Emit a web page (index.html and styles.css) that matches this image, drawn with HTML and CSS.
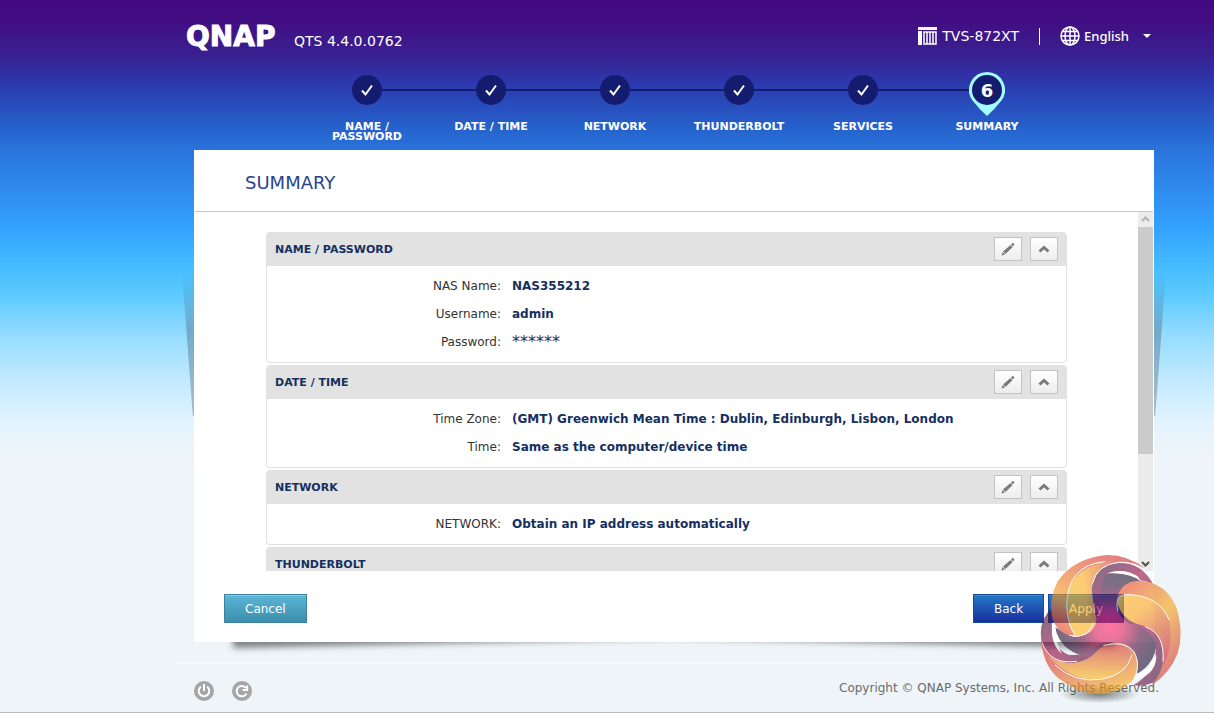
FILE: index.html
```html
<!DOCTYPE html>
<html lang="en">
<head>
    <meta charset="UTF-8">
    <meta name="viewport" content="width=device-width, initial-scale=1.0">
    <title>QTS Setup</title>
    <link rel="stylesheet" href="styles.css">
</head>
<body>
    <!-- shared icons -->
    <svg class="sprite" aria-hidden="true">
        <symbol id="check" viewBox="0 0 14 14"><path d="M2 7.500l3.500 4L12 2.500" fill="none" stroke="#fff" stroke-width="2"/></symbol>
        <symbol id="pencil" viewBox="0 0 14 14"><path d="M.5 13.500l1-3.500 2.500 2.500z M2 9.500l7.500-6.500 2 2.200-7 6.800z M10 2.500L11.800.8l1.700 1.800-1.600 1.900z" fill="#7a7a7a"/></symbol>
        <symbol id="chevron" viewBox="0 0 12 8"><path d="M1.500 6.500L6 2.500l4.500 4" fill="none" stroke="#7a7a7a" stroke-width="3"/></symbol>
    </svg>

    <div class="page">
        <header class="top">
            <div class="brand">
                <span class="logo">QNAP</span>
                <span class="version">QTS 4.4.0.0762</span>
            </div>
            <div class="device">
                <svg width="19" height="18" viewBox="0 0 19 18">
                    <path d="M0 0h19v3H0z M0 4h4v14H0z" fill="#fff"/>
                    <path d="M6 5h12v12H6z M9 5v12 M12 5v12 M15 5v12" fill="none" stroke="#fff" stroke-width="1.500"/>
                </svg>
                <span class="model">TVS-872XT</span>
                <span class="divider"></span>
                <label for="language" aria-label="Language">
                    <svg width="20" height="20" viewBox="0 0 20 20" fill="none" stroke="#fff" stroke-width="1.500">
                        <circle cx="10" cy="10" r="9"/>
                        <ellipse cx="10" cy="10" rx="5" ry="9"/>
                        <path d="M10 1v18 M1 10h18 M2.500 5.500h15 M2.500 14.500h15"/>
                    </svg>
                </label>
                <select id="language" class="language">
                    <option>English</option>
                </select>
                <svg class="caret" width="8" height="4" viewBox="0 0 8 4"><path d="M0 0h8L4 4z" fill="#fff"/></svg>
            </div>
        </header>

        <ol class="steps">
            <li><span class="dot"><svg width="14" height="14"><use href="#check"/></svg></span><span class="step-name">NAME / PASSWORD</span></li>
            <li><span class="dot"><svg width="14" height="14"><use href="#check"/></svg></span><span class="step-name">DATE / TIME</span></li>
            <li><span class="dot"><svg width="14" height="14"><use href="#check"/></svg></span><span class="step-name">NETWORK</span></li>
            <li><span class="dot"><svg width="14" height="14"><use href="#check"/></svg></span><span class="step-name">THUNDERBOLT</span></li>
            <li><span class="dot"><svg width="14" height="14"><use href="#check"/></svg></span><span class="step-name">SERVICES</span></li>
            <li class="current">
                <span class="dot">6</span>
                <svg class="pin" width="36" height="44" viewBox="0 0 36 44"><path d="M18 0a18 18 0 0 1 14.500 28.600Q26 37 18 44 10 37 3.500 28.600A18 18 0 0 1 18 0z" fill="#a1fbff"/></svg>
                <span class="step-name">SUMMARY</span>
            </li>
        </ol>

        <main class="card">
            <h1>SUMMARY</h1>
            <div class="viewport">
                <div class="sections">
                    <section>
                        <div class="section-head">
                            <h2>NAME / PASSWORD</h2>
                            <button class="tool" aria-label="Edit"><svg width="14" height="14"><use href="#pencil"/></svg></button>
                            <button class="tool" aria-label="Collapse"><svg width="12" height="8"><use href="#chevron"/></svg></button>
                        </div>
                        <dl>
                            <dt>NAS Name:</dt><dd>NAS355212</dd>
                            <dt>Username:</dt><dd>admin</dd>
                            <dt>Password:</dt><dd class="masked">******</dd>
                        </dl>
                    </section>
                    <section>
                        <div class="section-head">
                            <h2>DATE / TIME</h2>
                            <button class="tool" aria-label="Edit"><svg width="14" height="14"><use href="#pencil"/></svg></button>
                            <button class="tool" aria-label="Collapse"><svg width="12" height="8"><use href="#chevron"/></svg></button>
                        </div>
                        <dl>
                            <dt>Time Zone:</dt><dd>(GMT) Greenwich Mean Time : Dublin, Edinburgh, Lisbon, London</dd>
                            <dt>Time:</dt><dd>Same as the computer/device time</dd>
                        </dl>
                    </section>
                    <section>
                        <div class="section-head">
                            <h2>NETWORK</h2>
                            <button class="tool" aria-label="Edit"><svg width="14" height="14"><use href="#pencil"/></svg></button>
                            <button class="tool" aria-label="Collapse"><svg width="12" height="8"><use href="#chevron"/></svg></button>
                        </div>
                        <dl>
                            <dt>NETWORK:</dt><dd>Obtain an IP address automatically</dd>
                        </dl>
                    </section>
                    <section>
                        <div class="section-head">
                            <h2>THUNDERBOLT</h2>
                            <button class="tool" aria-label="Edit"><svg width="14" height="14"><use href="#pencil"/></svg></button>
                            <button class="tool" aria-label="Collapse"><svg width="12" height="8"><use href="#chevron"/></svg></button>
                        </div>
                    </section>
                </div>
                <div class="scrollbar">
                    <svg width="15" height="15" viewBox="0 0 15 15"><path d="M4 9l3.500-3.500L11 9" fill="none" stroke="#b0b0b0" stroke-width="2"/></svg>
                    <div class="track"><div class="thumb"></div></div>
                    <svg width="15" height="15" viewBox="0 0 15 15"><path d="M4 6l3.500 3.500L11 6" fill="none" stroke="#505050" stroke-width="2"/></svg>
                </div>
            </div>
            <div class="actions">
                <button class="btn cancel">Cancel</button>
                <button class="btn">Back</button>
                <button class="btn">Apply</button>
            </div>
            <div class="side-shadow left"></div>
            <div class="side-shadow right"></div>
            <div class="bottom-shadow"><div class="wedge"></div></div>
        </main>

        <footer>
            <button class="round" aria-label="Power">
                <svg width="20" height="20" viewBox="0 0 20 20"><circle cx="10" cy="10" r="10" fill="#a5a5a5"/><path d="M7 5.600a5.300 5.300 0 1 0 6 0 M10 3v7" fill="none" stroke="#fff" stroke-width="2"/></svg>
            </button>
            <button class="round" aria-label="Restart">
                <svg width="20" height="20" viewBox="0 0 20 20"><circle cx="10" cy="10" r="10" fill="#a5a5a5"/><path d="M14.500 12.500a5.200 5.200 0 1 1-.5-5.500 M15.200 4.500v4.500h-4.500" fill="none" stroke="#fff" stroke-width="2"/></svg>
            </button>
            <p>Copyright © QNAP Systems, Inc. All Rights Reserved.</p>
        </footer>

        <svg class="swirl" width="170" height="173" viewBox="0 0 510 519" aria-hidden="true">
            <defs>
                <linearGradient id="armA" x1=".8" y1="0" x2=".2" y2="1"><stop offset="0" stop-color="#d02c38"/><stop offset=".35" stop-color="#e6602c"/><stop offset=".7" stop-color="#f79a1c"/><stop offset="1" stop-color="#dc4030"/></linearGradient>
                <linearGradient id="armA2" x1="0" y1=".5" x2="1" y2=".3"><stop offset="0" stop-color="#fbb41c"/><stop offset=".35" stop-color="#fbb020"/><stop offset="1" stop-color="#d43040"/></linearGradient>
                <linearGradient id="armB" x1=".2" y1="0" x2=".8" y2="1"><stop offset="0" stop-color="#e04a2c"/><stop offset=".45" stop-color="#f9a81c"/><stop offset="1" stop-color="#cc2438"/></linearGradient>
                <linearGradient id="armB2" x1="0" y1="0" x2=".6" y2="1"><stop offset="0" stop-color="#fbb41c"/><stop offset=".35" stop-color="#f9a420"/><stop offset="1" stop-color="#cc2438"/></linearGradient>
                <linearGradient id="armC" x1="0" y1="0" x2=".6" y2="1"><stop offset="0" stop-color="#cc2438"/><stop offset=".45" stop-color="#dc4834"/><stop offset="1" stop-color="#f9a81c"/></linearGradient>
                <linearGradient id="armC2" x1=".5" y1="0" x2=".4" y2="1"><stop offset="0" stop-color="#d63434"/><stop offset=".9" stop-color="#fbb41c"/></linearGradient>
                <radialGradient id="core" gradientUnits="userSpaceOnUse" cx="238" cy="262" r="145"><stop offset="0" stop-color="#ff2468"/><stop offset=".3" stop-color="#d8205c"/><stop offset=".65" stop-color="#5c1244"/><stop offset="1" stop-color="#261637"/></radialGradient>
                <linearGradient id="band" x1="0" y1="0" x2="1" y2="1"><stop offset="0" stop-color="#261637"/><stop offset=".5" stop-color="#9c0c48"/><stop offset="1" stop-color="#261637"/></linearGradient>
                <radialGradient id="ground"><stop offset="0" stop-color="#000" stop-opacity=".7"/><stop offset="1" stop-color="#000" stop-opacity="0"/></radialGradient>
            </defs>
            <ellipse cx="208" cy="462" rx="120" ry="28" fill="url(#ground)" opacity=".7"/>
            <g opacity=".62">
                <!-- dark core -->
                <path d="M190 190Q190 120 235 100Q300 95 345 130L262 190Q262 225 300 245Q370 255 380 310Q375 370 322 402Q320 320 250 306Q200 325 160 348Q90 330 75 262L130 290Q190 290 200 240z" fill="url(#core)"/>
                <!-- outer bands -->
                <path d="M186 160Q180 95 240 72Q330 55 370 134Q345 120 325 122Q290 85 238 98Q215 112 212 150Q212 205 196 240Q200 200 186 160z" fill="url(#band)"/>
                <path d="M262 165Q250 225 300 252Q362 262 378 315Q380 395 310 436Q375 445 415 385Q430 290 365 262Q290 245 262 165z" fill="url(#band)"/>
                <path d="M66 205Q25 240 34 300Q50 370 130 370Q175 365 215 328Q245 310 265 310Q235 300 198 318Q165 350 115 344Q60 320 66 248z" fill="url(#band)"/>
                <!-- orange arms -->
                <path d="M345 85Q290 43 228 45Q130 55 82 125Q55 180 66 230Q80 285 140 289Q190 285 200 238Q188 205 186 160Q180 95 240 72Q290 58 345 85z" fill="url(#armA)"/>
                <path d="M260 180Q270 123 328 122Q410 127 440 205Q462 280 443 340Q420 400 365 436Q405 390 400 330Q388 275 345 257Q275 248 260 180z" fill="url(#armB)"/>
                <path d="M33 290Q35 370 85 415Q145 462 205 462Q275 458 308 420Q340 370 305 326Q275 300 235 312Q210 322 190 344Q155 375 105 369Q50 355 33 290z" fill="url(#armC)"/>
                <!-- inner halves of the arms -->
                <path d="M265 62Q110 70 110 200Q115 260 135 287Q190 285 200 238Q188 205 186 160Q180 95 240 72z" fill="url(#armA2)"/>
                <path d="M262 190Q260 162 300 164Q390 170 417 240Q432 310 398 385Q404 355 400 330Q388 275 345 257Q280 248 262 190z" fill="url(#armB2)"/>
                <path d="M50 345Q135 430 215 418Q290 405 306 345Q275 300 235 312Q210 322 190 344Q155 375 105 369Q75 362 50 345z" fill="url(#armC2)"/>
                <!-- highlights -->
                <g fill="none" stroke="#fff" stroke-width="3">
                    <path d="M225 65Q110 75 110 200Q115 260 135 285"/>
                    <path d="M188 130Q200 75 265 67Q315 65 345 90"/>
                    <path d="M118 286Q175 300 192 245"/>
                    <path d="M264 215Q250 160 300 164Q390 170 417 240"/>
                    <path d="M345 260Q405 280 399 365"/>
                    <path d="M75 375Q135 430 215 418Q290 405 306 345"/>
                    <path d="M220 316Q285 300 312 335Q330 370 318 400"/>
                    <path d="M36 308Q60 375 140 364"/>
                </g>
                <path d="M232 100Q280 82 322 108L335 125Q290 92 232 100z M68 250Q58 310 96 342Q75 305 78 268z M378 340Q370 380 314 405L318 422Q385 398 378 340z" fill="#fff"/>
            </g>
        </svg>
    </div>
</body>
</html>
```
FILE: styles.css
```css
* {
    box-sizing: border-box;
}
body {
    margin: 0;
    font-family: Verdana, "DejaVu Sans", sans-serif;
    font-size: 12px;
    color: #333;
}
h1, h2, p, ol, dl, dd {
    margin: 0;
    padding: 0;
}
.sprite {
    display: none;
}
.page {
    position: relative;
    display: flex;
    flex-direction: column;
    height: 100vh;
    min-height: 600px;
    padding: 0 60px 0 194px;
    border-bottom: 1px solid #b8bcbe;
    background: #eef4f7 linear-gradient(#430a80 0, #420d82 20px, #382292 58px, #2c38ac 82px, #2561cb 127px, #2a74dc 150px, #2f8aee 188px, #33a1ff 227px, #48beff 270px, #5ccaff 295px, #94dcff 335px, #c0e9ff 378px, #e4f4ff 425px, #eef4f7 453px);
}

/* header */
.top {
    display: flex;
    justify-content: space-between;
    height: 72px;
    margin-left: -8px;
    color: #fff;
}
.brand {
    display: flex;
    align-items: baseline;
    gap: 12px;
    padding-top: 20px;
}
.logo {
    min-width: 96px;
    font-size: 28px;
    line-height: 34px;
    font-weight: bold;
    -webkit-text-stroke: 1px #fff;
}
.version, .model {
    font-size: 14px;
}
.device {
    display: flex;
    align-items: center;
    height: 72px;
}
.model {
    margin-left: 5px;
}
.divider {
    width: 1px;
    height: 17px;
    margin: 0 20px;
    background: #fff;
}
.device label {
    display: flex;
}
.language {
    appearance: none;
    margin: 0 14px 0 4px;
    padding: 0;
    border: 0;
    background: none;
    color: #fff;
    font: 500 13px "Noto Sans", sans-serif;
}
.language option {
    color: #333;
}
.caret {
    margin-right: 3px;
}

/* wizard steps */
.steps {
    display: flex;
    align-self: center;
    height: 78px;
    margin-left: 6px;
    list-style: none;
}
.steps li {
    position: relative;
    display: flex;
    flex-direction: column;
    align-items: center;
    gap: 17px;
    width: 124px;
    padding-top: 3px;
}
.steps li:not(:first-child)::before {
    content: "";
    position: absolute;
    top: 17px;
    left: -50%;
    width: 100%;
    height: 2px;
    background: #131c6e;
}
.dot {
    position: relative;
    z-index: 2;
    display: flex;
    align-items: center;
    justify-content: center;
    width: 30px;
    height: 30px;
    border-radius: 50%;
    background: #131c6e;
    color: #fff;
    font-size: 18px;
    font-weight: bold;
}
.pin {
    position: absolute;
    top: 0;
    left: 44px;
    z-index: 1;
}
.step-name {
    max-width: 100px;
    color: #fff;
    font-size: 11px;
    line-height: 10px;
    font-weight: bold;
    text-align: center;
}

/* card */
.card {
    position: relative;
    display: flex;
    flex-direction: column;
    flex: 1;
    min-height: 0;
    background: #fff;
}
h1 {
    margin: 0 1px;
    padding: 21px 50px 16px;
    border-bottom: 1px solid #c8cacb;
    color: #27458f;
    font-size: 18px;
    line-height: 24px;
    font-weight: normal;
}
.viewport {
    display: flex;
    flex: 1;
    min-height: 0;
    padding-right: 1px;
}
.sections {
    flex: 1;
    padding: 20px 71px 0 72px;
    overflow-y: auto;
    scrollbar-width: none;
}
section {
    margin-bottom: 2px;
    border: 1px solid #e2e2e2;
    border-top: 0;
    border-radius: 4px;
    overflow: hidden;
}
.section-head {
    display: flex;
    align-items: center;
    gap: 8px;
    height: 34px;
    padding: 0 8px;
    background: #e2e2e2;
}
h2 {
    flex: 1;
    color: #15305f;
    font-size: 11px;
    font-weight: bold;
}
.tool {
    display: flex;
    align-items: center;
    justify-content: center;
    width: 28px;
    height: 24px;
    padding: 0;
    border: 1px solid #c3c3c3;
    background: linear-gradient(#fff, #ededed);
}
dl {
    display: grid;
    grid-template-columns: 234px 1fr;
    column-gap: 11px;
    padding: 6px 0;
    line-height: 28px;
}
dt {
    text-align: right;
}
dd {
    color: #15305f;
    font-weight: bold;
}
.masked {
    font-size: 16px;
    font-weight: normal;
}
.scrollbar {
    display: flex;
    flex-direction: column;
    width: 15px;
    background: #ececec;
}
.track {
    flex: 1;
}
.thumb {
    height: 69%;
    background: #cbcbcb;
}
.actions {
    display: flex;
    gap: 4px;
    padding: 23px 30px 19px;
}
.btn {
    height: 29px;
    padding: 0 20px;
    border: 1px solid #174a96;
    background: linear-gradient(#2478c6, #182f9e);
    box-shadow: inset 0 1px #3c8ad0;
    color: #fff;
    font: 12px Verdana, "DejaVu Sans", sans-serif;
}
.cancel {
    margin-right: auto;
    border-color: #3a829f;
    background: linear-gradient(#5cb6d6, #3d8dac);
    box-shadow: inset 0 1px #83cde5;
}
.side-shadow {
    position: absolute;
    top: 122px;
    width: 12px;
    height: 144px;
    background: linear-gradient(rgba(70, 100, 120, 0), rgba(70, 100, 120, .4) 40%, rgba(70, 90, 110, .35));
}
.left {
    right: 100%;
    clip-path: polygon(0 0, 100% 0, 100% 100%, 90% 100%);
}
.right {
    left: 100%;
    clip-path: polygon(0 0, 100% 0, 10% 100%, 0 100%);
}
.bottom-shadow {
    position: absolute;
    top: 100%;
    left: 30px;
    right: 30px;
    height: 16px;
    overflow: hidden;
}
.wedge {
    height: 20px;
    margin: -14px 9px 0;
    filter: blur(3px);
}
.wedge::before {
    content: "";
    display: block;
    height: 100%;
    background: rgba(50, 55, 55, .6);
    clip-path: polygon(0 0, 100% 0, 100% 100%, 50% 50%, 0 100%);
}

/* footer */
footer {
    display: flex;
    gap: 18px;
    height: 50px;
    margin: 20px -5px 0 -20px;
    padding: 18px 0 0 20px;
    border-top: 1px solid #f8fbfc;
    color: #6b6b6b;
}
.round {
    display: flex;
    height: 20px;
    padding: 0;
    border: 0;
    background: none;
}
footer p {
    margin-left: auto;
    line-height: 14px;
}
.swirl {
    position: absolute;
    right: 14px;
    bottom: -1px;
    pointer-events: none;
}
```
